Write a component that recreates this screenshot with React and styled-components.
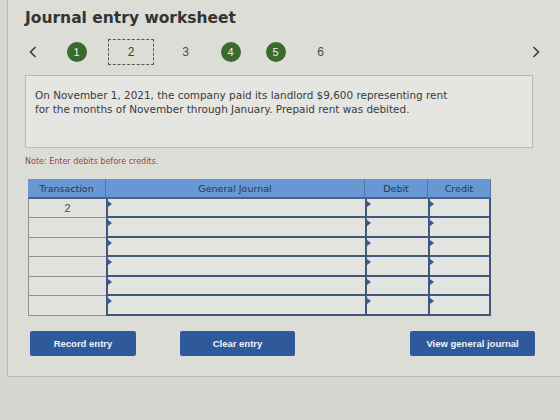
import React from "react";
import styled, { createGlobalStyle } from "styled-components";

const Global = createGlobalStyle`
  html, body { margin: 0; padding: 0; background: #d5d6cf; overflow: hidden; }
  body { font-family: "DejaVu Sans", Verdana, sans-serif; }
`;

const Page = styled.div`
  width: 560px;
  height: 420px;
  background: #d5d6cf;
`;

const Panel = styled.div`
  margin-left: 7px;
  height: 377px;
  box-sizing: border-box;
  border-left: 1px solid #b7b8b2;
  border-bottom: 1px solid #b7b8b2;
  background: #dcddd6;
  padding: 8px 0 0 17px;
`;

const Title = styled.h1`
  margin: 0;
  font-family: "DejaVu Sans", Verdana, sans-serif;
  font-weight: bold;
  font-size: 15.5px;
  line-height: 20px;
  color: #343434;
`;

const Nav = styled.div`
  display: flex;
  align-items: center;
  height: 28px;
  margin-top: 10px;
  padding-right: 16px;
`;

const Chevron = styled.span`
  width: 16px;
  display: flex;
  justify-content: center;
`;

const Steps = styled.div`
  display: flex;
  align-items: center;
  margin-left: 13px;
  flex: 1;
`;

const Slot = styled.div`
  width: ${(p) => (p.$wide ? 64 : 45)}px;
  display: flex;
  justify-content: center;
  align-items: center;
`;

const Done = styled.span`
  width: 20px;
  height: 20px;
  border-radius: 50%;
  background: #3b6a2f;
  color: #eef3ea;
  font-family: "Liberation Sans", Arial, sans-serif;
  font-size: 11px;
  display: flex;
  align-items: center;
  justify-content: center;
`;

const Current = styled.span`
  width: 44px;
  height: 24px;
  border: 1px dashed #55575a;
  color: #3a3a3a;
  font-family: "Liberation Sans", Arial, sans-serif;
  font-size: 12px;
  display: flex;
  align-items: center;
  justify-content: center;
`;

const Plain = styled.span`
  color: #4a4a4a;
  font-family: "Liberation Sans", Arial, sans-serif;
  font-size: 12px;
`;

const Prompt = styled.div`
  margin-top: 9px;
  width: 508px;
  height: 73px;
  box-sizing: border-box;
  border: 1px solid #babab4;
  background: #e5e5e1;
  padding: 12px 9px;
  font-size: 10.45px;
  line-height: 14px;
  color: #3a3a3a;
`;

const Note = styled.div`
  margin-top: 9px;
  font-size: 8px;
  color: #a14646;
`;

const Table = styled.div`
  margin-top: 13px;
  margin-left: 3px;
  width: 463px;
  display: grid;
  grid-template-columns: 78px 259px 63px 63px;
  grid-auto-rows: 19.5px;
`;

const Head = styled.div`
  background: #6898d3;
  color: #26374f;
  font-size: 9.5px;
  display: flex;
  align-items: center;
  justify-content: center;
  border-right: 1px solid #4f77a8;
  border-bottom: 2px solid #46628a;
  box-sizing: border-box;
  height: 20px;
`;

const TxCell = styled.div`
  background: #e1e2dd;
  border-left: 1px solid #8f918d;
  border-bottom: 1px solid #8f918d;
  box-sizing: border-box;
  font-family: "Liberation Sans", Arial, sans-serif;
  font-size: 11px;
  color: #4a4a4a;
  display: flex;
  align-items: center;
  justify-content: center;
`;

const InputCell = styled.div`
  position: relative;
  background: #e3e4df;
  border-left: 2px solid #41587a;
  border-bottom: 2px solid #41587a;
  border-right: ${(p) => (p.$last ? "2px solid #41587a" : "none")};
  box-sizing: border-box;
  &::before {
    content: "";
    position: absolute;
    left: 0;
    top: 2px;
    border-top: 3px solid transparent;
    border-bottom: 3px solid transparent;
    border-left: 4px solid #2f5a9e;
  }
`;

const Actions = styled.div`
  display: flex;
  margin-top: 15px;
  margin-left: 5px;
`;

const Button = styled.button`
  width: ${(p) => p.$w}px;
  height: 25px;
  margin-left: ${(p) => p.$ml || 0}px;
  border: none;
  border-radius: 2px;
  background: #2e5a9c;
  color: #f1f4f8;
  font-family: "Liberation Sans", Arial, sans-serif;
  font-weight: bold;
  font-size: 9.5px;
  padding: 0;
`;

const ChevronIcon = ({ dir }) => (
  <svg width="10" height="14" viewBox="0 0 10 14">
    <path
      d={dir === "left" ? "M7.5 2 L2.5 7 L7.5 12" : "M2.5 2 L7.5 7 L2.5 12"}
      fill="none"
      stroke="#3a3a3a"
      strokeWidth="1.6"
    />
  </svg>
);

const steps = [
  { n: 1, kind: "done" },
  { n: 2, kind: "current" },
  { n: 3, kind: "plain" },
  { n: 4, kind: "done" },
  { n: 5, kind: "done" },
  { n: 6, kind: "plain" },
];

export default function App() {
  const rows = Array.from({ length: 6 }, (_, i) => i);
  return (
    <Page>
      <Global />
      <Panel>
        <Title>Journal entry worksheet</Title>
        <Nav>
          <Chevron>
            <ChevronIcon dir="left" />
          </Chevron>
          <Steps>
            {steps.map((s) => (
              <Slot key={s.n} $wide={s.kind === "current"}>
                {s.kind === "done" && <Done>{s.n}</Done>}
                {s.kind === "current" && <Current>{s.n}</Current>}
                {s.kind === "plain" && <Plain>{s.n}</Plain>}
              </Slot>
            ))}
          </Steps>
          <Chevron>
            <ChevronIcon dir="right" />
          </Chevron>
        </Nav>
        <Prompt>
          On November 1, 2021, the company paid its landlord $9,600 representing rent
          <br />
          for the months of November through January. Prepaid rent was debited.
        </Prompt>
        <Note>Note: Enter debits before credits.</Note>
        <Table>
          <Head>Transaction</Head>
          <Head>General Journal</Head>
          <Head>Debit</Head>
          <Head>Credit</Head>
          {rows.map((i) => (
            <React.Fragment key={i}>
              <TxCell>{i === 0 ? "2" : ""}</TxCell>
              <InputCell />
              <InputCell />
              <InputCell $last />
            </React.Fragment>
          ))}
        </Table>
        <Actions>
          <Button $w={106}>Record entry</Button>
          <Button $w={115} $ml={44}>Clear entry</Button>
          <Button $w={125} $ml={115}>View general journal</Button>
        </Actions>
      </Panel>
    </Page>
  );
}
